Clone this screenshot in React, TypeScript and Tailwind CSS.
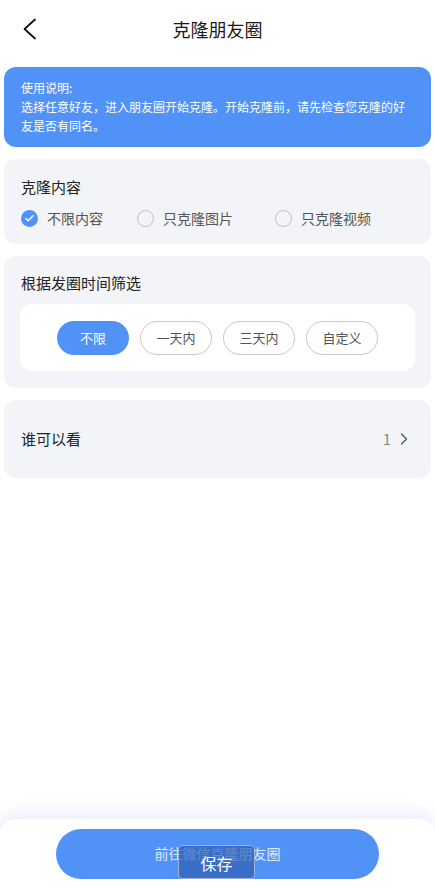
import { ChevronRight, Check } from "lucide-react"
import { useState } from "react"

const contentOptions = ["不限内容", "只克隆图片", "只克隆视频"]
const timeOptions = ["不限", "一天内", "三天内", "自定义"]

export default function App() {
  const [content, setContent] = useState(0)
  const [time, setTime] = useState(0)

  return (
    <div
      className="min-h-screen flex flex-col bg-white text-[#222]"
      style={{ fontFamily: '"Noto Sans CJK SC", "Noto Sans", sans-serif' }}
    >
      {/* header */}
      <div className="relative h-[58px] flex items-center justify-center">
        <button className="absolute left-[22px] top-[18px] text-[#111]">
          <svg width="15" height="22" viewBox="0 0 15 22" fill="none">
            <path d="M13 1.5 L2.5 11 L13 20.5" stroke="currentColor" strokeWidth="1.8" strokeLinecap="round" strokeLinejoin="round" />
          </svg>
        </button>
        <h1 className="text-[18px] font-normal leading-none text-[#1a1a1a]">克隆朋友圈</h1>
      </div>

      <div className="px-1 pt-[9px] flex flex-col gap-3">
        {/* tips */}
        <div className="rounded-xl bg-[#5192f7] px-[17px] pt-[11px] pb-[12px] text-[12px] leading-[19px] text-white">
          <p>使用说明:</p>
          <p>选择任意好友，进入朋友圈开始克隆。开始克隆前，请先检查您克隆的好友是否有同名。</p>
        </div>

        {/* clone content */}
        <div className="rounded-xl bg-[#f3f4f8] px-[17px] pt-[17px] pb-[15px]">
          <div className="text-[15px] leading-[22px]">克隆内容</div>
          <div className="mt-[9px] flex items-center">
            {contentOptions.map((opt, i) => (
              <button
                key={opt}
                onClick={() => setContent(i)}
                className={`flex items-center gap-[9px] ${i === 0 ? "w-[116px]" : i === 1 ? "w-[138px]" : ""}`}
              >
                {content === i ? (
                  <span className="w-[17px] h-[17px] rounded-full bg-[#5192f7] flex items-center justify-center">
                    <Check className="w-[11px] h-[11px] text-white" strokeWidth={3} />
                  </span>
                ) : (
                  <span className="w-[17px] h-[17px] rounded-full border-[1.5px] border-[#bdbdbd]" />
                )}
                <span className="text-[14px] leading-[22px] text-[#555]">{opt}</span>
              </button>
            ))}
          </div>
        </div>

        {/* time filter */}
        <div className="rounded-xl bg-[#f3f4f8] px-4 pt-[16px] pb-[17px]">
          <div className="px-[1px] text-[15px] leading-[22px]">根据发圈时间筛选</div>
          <div className="mt-[10px] rounded-xl bg-white h-[67px] flex items-center justify-center gap-[11px]">
            {timeOptions.map((opt, i) => (
              <button
                key={opt}
                onClick={() => setTime(i)}
                className={`w-[72px] h-[34px] rounded-full text-[13px] ${
                  time === i ? "bg-[#5192f7] text-white" : "border border-[#c8c8c8] text-[#555]"
                }`}
              >
                {opt}
              </button>
            ))}
          </div>
        </div>

        {/* who can see */}
        <div className="rounded-xl bg-[#f3f4f8] h-[78px] px-[17px] flex items-center justify-between">
          <span className="text-[15px]">谁可以看</span>
          <span className="flex items-center gap-[3px] text-[#888] text-[15px]">
            1
            <ChevronRight className="w-[20px] h-[20px] text-[#555]" strokeWidth={1.5} />
          </span>
        </div>
      </div>

      <div className="flex-1" />

      {/* bottom bar */}
      <div className="relative rounded-t-2xl bg-white shadow-[0_-8px_14px_rgba(226,230,250,0.6)] pt-[10px] pb-[10px] flex justify-center">
        <button className="w-[323px] h-[50px] rounded-full bg-[#5192f7] text-[14px] text-white/80 pb-[2px]">
          前往微信克隆朋友圈
        </button>
        <div className="absolute left-[178px] top-[26px] w-[77px] h-[34px] rounded-[4px] border border-[#9fb3d6] bg-[#2d5fb3]/70 flex items-center justify-center text-white text-[16px] pt-[2px]">
          保存
        </div>
      </div>
    </div>
  )
}
